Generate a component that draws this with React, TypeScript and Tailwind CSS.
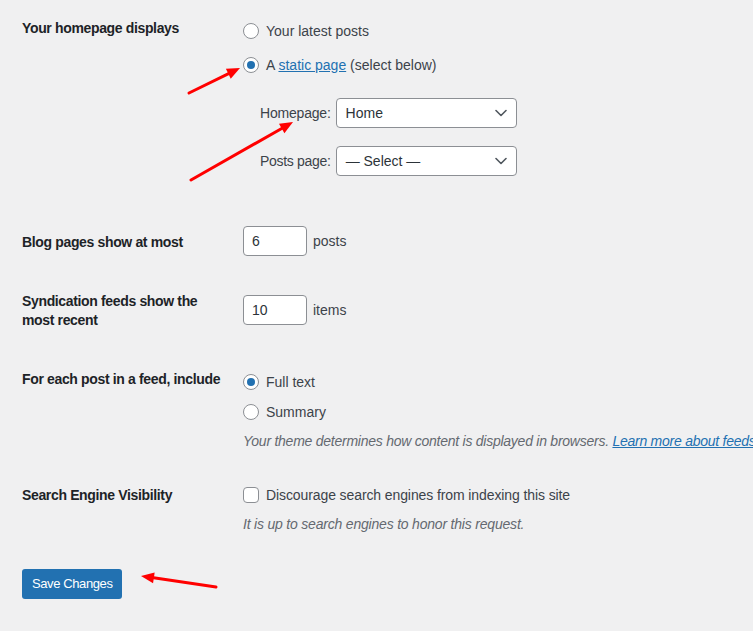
import React from 'react';

const Radio = ({ checked }: { checked?: boolean }) => (
  <span className="w-4 h-4 shrink-0 rounded-full border border-[#8c8f94] bg-white flex items-center justify-center">
    {checked && <span className="w-2 h-2 rounded-full bg-[#2271b1]" />}
  </span>
);

const Chevron = () => (
  <svg width="12" height="8" viewBox="0 0 12 8" fill="none">
    <path d="M1 1.5l5 5 5-5" stroke="#50575e" strokeWidth="1.6" strokeLinecap="round" strokeLinejoin="round" />
  </svg>
);

const FakeSelect = ({ value }: { value: string }) => (
  <div className="w-[181px] h-[30px] rounded-[4px] border border-[#8c8f94] bg-white flex items-center justify-between pl-[9px] pr-[9px] text-[#2c3338]">
    <span>{value}</span>
    <Chevron />
  </div>
);

// arrow helper: tail -> tip, filled head
function Arrow({ x1, y1, x2, y2 }: { x1: number; y1: number; x2: number; y2: number }) {
  const dx = x2 - x1;
  const dy = y2 - y1;
  const len = Math.hypot(dx, dy);
  const ux = dx / len;
  const uy = dy / len;
  const hl = 13;
  const hw = 5.5;
  const bx = x2 - ux * hl;
  const by = y2 - uy * hl;
  const pts = `${x2},${y2} ${bx - uy * hw},${by + ux * hw} ${bx + uy * hw},${by - ux * hw}`;
  return (
    <g>
      <line x1={x1} y1={y1} x2={bx + ux * 2} y2={by + uy * 2} stroke="#ff0000" strokeWidth="3" strokeLinecap="round" />
      <polygon points={pts} fill="#ff0000" />
    </g>
  );
}

const th = 'w-[221px] shrink-0 font-bold text-[#1d2327] tracking-[-0.35px]';

export default function App() {
  return (
    <div className="relative w-[753px] h-[631px] overflow-hidden bg-[#f0f0f1] font-['Liberation_Sans',Arial,sans-serif] text-[14px] leading-5 text-[#3c434a]">
      <div className="pl-[22px] pt-[18px] flex flex-col">
        {/* homepage displays */}
        <div className="flex">
          <div className={th}>Your homepage displays</div>
          <div className="pt-[3px] flex flex-col">
            <label className="flex items-center gap-[7px]">
              <Radio />
              <span>Your latest posts</span>
            </label>
            <label className="flex items-center gap-[7px] mt-[14px]">
              <Radio checked />
              <span>
                A <span className="text-[#2271b1] underline">static page</span> (select below)
              </span>
            </label>
            <div className="pl-[17px] mt-[23px] flex flex-col gap-[18px]">
              <div className="flex items-center gap-[5px]">
                <span className="tracking-[-0.2px]">Homepage:</span>
                <FakeSelect value="Home" />
              </div>
              <div className="flex items-center gap-[5px]">
                <span className="tracking-[-0.3px]">Posts page:</span>
                <FakeSelect value="— Select —" />
              </div>
            </div>
          </div>
        </div>

        {/* blog pages */}
        <div className="flex mt-[50px]">
          <div className={`${th} pt-[6px]`}>Blog pages show at most</div>
          <div className="flex items-center gap-[6px]">
            <div className="w-[64px] h-[30px] rounded-[4px] border border-[#8c8f94] bg-white px-[8px] flex items-center text-[#2c3338]">6</div>
            <span>posts</span>
          </div>
        </div>

        {/* syndication */}
        <div className="flex mt-[36px]">
          <div className={`${th} leading-[19px] pr-[30px]`}>Syndication feeds show the most recent</div>
          <div className="pt-[3px] flex items-start gap-[6px]">
            <div className="w-[64px] h-[30px] rounded-[4px] border border-[#8c8f94] bg-white px-[8px] flex items-center text-[#2c3338]">10</div>
            <span className="leading-[30px]">items</span>
          </div>
        </div>

        {/* feed include */}
        <div className="flex mt-[39px]">
          <div className={th}>For each post in a feed, include</div>
          <div className="pt-[3px] flex flex-col">
            <label className="flex items-center gap-[7px]">
              <Radio checked />
              <span>Full text</span>
            </label>
            <label className="flex items-center gap-[7px] mt-[10px]">
              <Radio />
              <span>Summary</span>
            </label>
            <p className="mt-[9px] italic text-[#646970] whitespace-nowrap tracking-[-0.25px]">
              Your theme determines how content is displayed in browsers.{' '}
              <span className="text-[#2271b1] underline">Learn more about feeds</span>.
            </p>
          </div>
        </div>

        {/* search engine */}
        <div className="flex mt-[34px]">
          <div className={th}>Search Engine Visibility</div>
          <div className="flex flex-col">
            <label className="flex items-center gap-[7px]">
              <span className="w-4 h-4 shrink-0 rounded-[4px] border border-[#8c8f94] bg-white" />
              <span className="tracking-[-0.1px]">Discourage search engines from indexing this site</span>
            </label>
            <p className="mt-[9px] italic text-[#646970] tracking-[-0.2px]">It is up to search engines to honor this request.</p>
          </div>
        </div>

        <div className="mt-[35px]">
          <button className="h-[30px] px-[10px] rounded-[3px] bg-[#2271b1] text-white text-[13px] leading-[28px] tracking-[-0.4px]">
            Save Changes
          </button>
        </div>
      </div>

      <svg className="absolute inset-0 pointer-events-none" width="753" height="631">
        <Arrow x1={189} y1={93} x2={240} y2={68} />
        <Arrow x1={191} y1={180} x2={293} y2={122} />
        <Arrow x1={216} y1={587} x2={141} y2={576} />
      </svg>
    </div>
  );
}
